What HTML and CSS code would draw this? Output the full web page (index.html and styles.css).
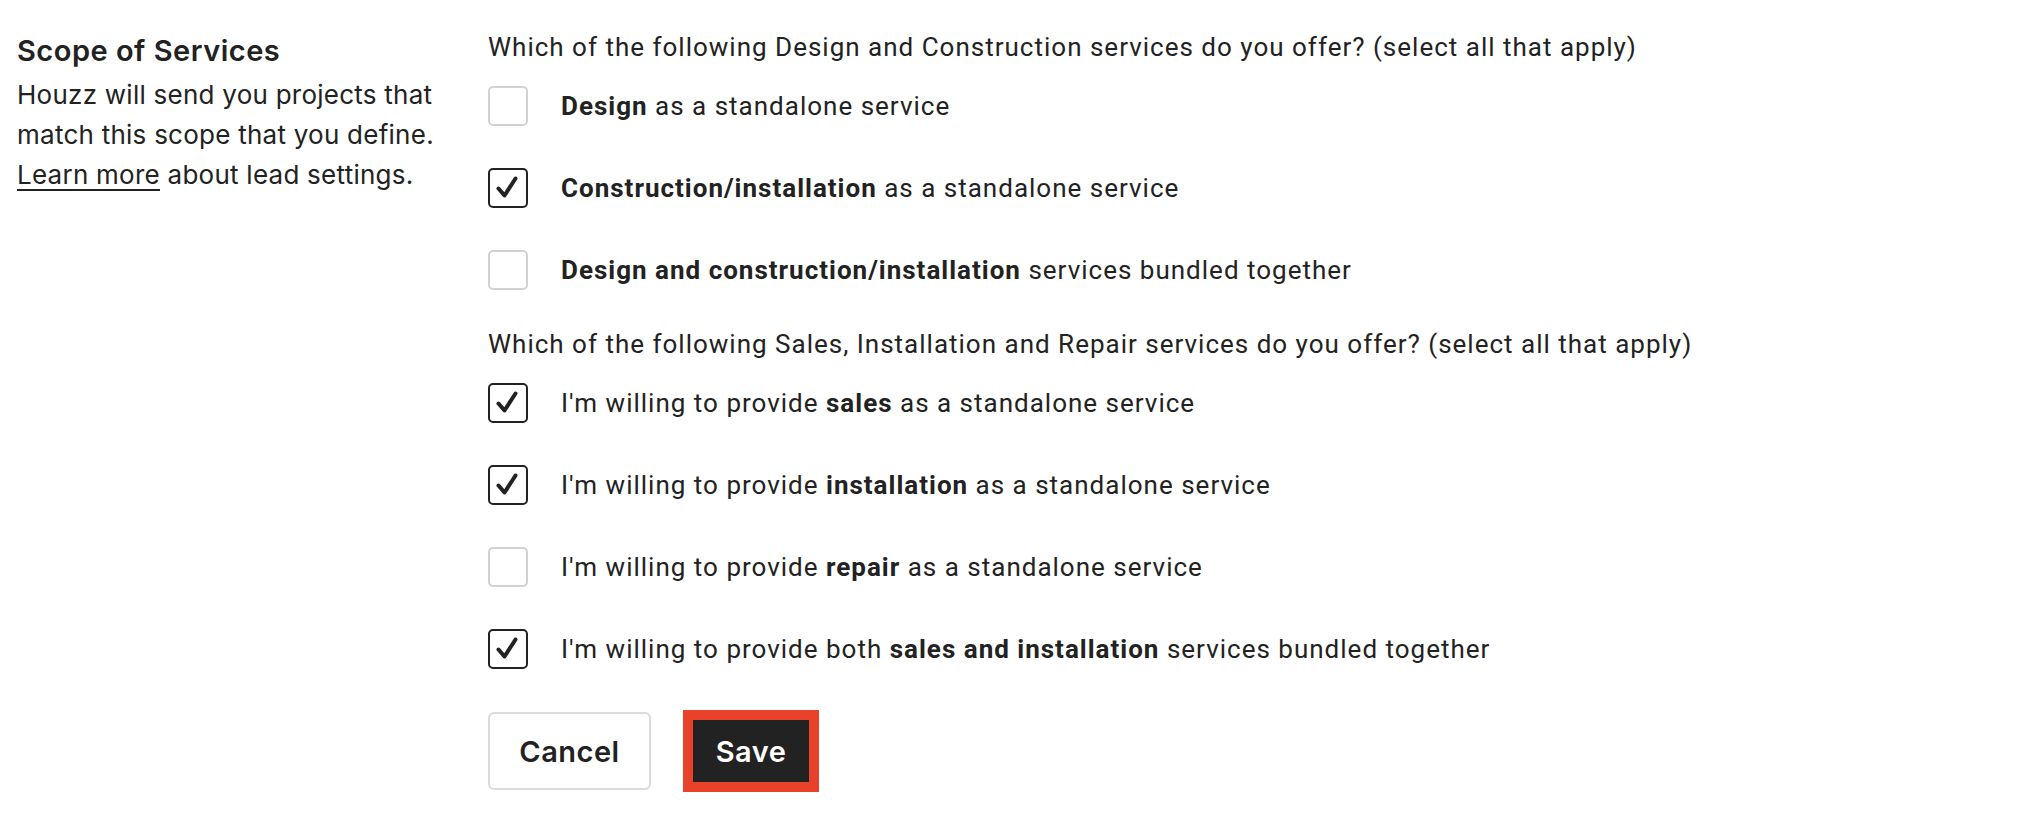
FILE: index.html
```html
<!DOCTYPE html>
<html>
<head>
<meta charset="utf-8">
<link rel="stylesheet" href="styles.css">
</head>
<body>
<div class="page">
  <aside class="intro">
    <h2 class="intro-title">Scope of Services</h2>
    <p class="intro-text">Houzz will send you projects that match this scope that you define. <a class="intro-link" href="#">Learn more</a> about lead settings.</p>
  </aside>
  <main class="form">
    <p class="question">Which of the following Design and Construction services do you offer? (select all that apply)</p>
    <div class="options">
      <label class="option"><span class="box"></span><span class="label"><b>Design</b> as a standalone service</span></label>
      <label class="option"><span class="box checked"><svg viewBox="0 0 40 40"><path d="M10.5 20.5 L16.5 27.5 L27.5 10.5"/></svg></span><span class="label"><b>Construction/installation</b> as a standalone service</span></label>
      <label class="option"><span class="box"></span><span class="label"><b>Design and construction/installation</b> services bundled together</span></label>
    </div>
    <p class="question question-second">Which of the following Sales, Installation and Repair services do you offer? (select all that apply)</p>
    <div class="options">
      <label class="option"><span class="box checked"><svg viewBox="0 0 40 40"><path d="M10.5 20.5 L16.5 27.5 L27.5 10.5"/></svg></span><span class="label">I'm willing to provide <b>sales</b> as a standalone service</span></label>
      <label class="option"><span class="box checked"><svg viewBox="0 0 40 40"><path d="M10.5 20.5 L16.5 27.5 L27.5 10.5"/></svg></span><span class="label">I'm willing to provide <b>installation</b> as a standalone service</span></label>
      <label class="option"><span class="box"></span><span class="label">I'm willing to provide <b>repair</b> as a standalone service</span></label>
      <label class="option"><span class="box checked"><svg viewBox="0 0 40 40"><path d="M10.5 20.5 L16.5 27.5 L27.5 10.5"/></svg></span><span class="label">I'm willing to provide both <b>sales and installation</b> services bundled together</span></label>
    </div>
    <div class="actions">
      <button class="btn btn-cancel">Cancel</button>
      <button class="btn btn-save">Save</button>
    </div>
  </main>
</div>
</body>
</html>
```

FILE: styles.css
```css
html, body {
  margin: 0;
  padding: 0;
  background: #ffffff;
}

body {
  color: #222222;
  font-family: "Inter", "Noto Sans", sans-serif;
}

.page {
  display: grid;
  grid-template-columns: 471px 1fr;
  padding: 27px 0 0 17px;
}

.intro-title {
  margin: 0;
  font-size: 29px;
  font-weight: 600;
  letter-spacing: 0.5px;
  line-height: 48px;
  color: #222222;
}

.intro-text {
  margin: 0;
  font-size: 26px;
  letter-spacing: 0.25px;
  line-height: 40px;
  width: 450px;
}

.intro-link {
  color: #222222;
  text-decoration: underline;
  text-underline-offset: 5px;
}

.form {
  font-family: "Roboto", "Noto Sans", sans-serif;
  font-size: 26px;
  letter-spacing: 1px;
}

.question {
  margin: 0;
  line-height: 40px;
}

.question-second {
  margin-top: 34px;
}

.options {
  display: flex;
  flex-direction: column;
  gap: 42px;
  margin-top: 19px;
}

.option {
  display: flex;
  align-items: center;
  gap: 33px;
  height: 40px;
}

.box {
  box-sizing: border-box;
  width: 40px;
  height: 40px;
  flex: none;
  border: 2px solid #d2d2d2;
  border-radius: 5px;
  display: flex;
  align-items: center;
  justify-content: center;
}

.box.checked {
  border-color: #222222;
}

.box svg {
  width: 40px;
  height: 40px;
  margin: -2px;
}

.box svg path {
  fill: none;
  stroke: #222222;
  stroke-width: 4;
  stroke-linecap: round;
  stroke-linejoin: round;
}

.label b {
  font-weight: 700;
  letter-spacing: 1px;
}

.actions {
  display: flex;
  align-items: center;
  gap: 32px;
  margin-top: 41px;
}

.btn {
  font-family: "Inter", "Noto Sans", sans-serif;
  font-size: 29px;
  font-weight: 600;
  letter-spacing: 0.5px;
  cursor: pointer;
}

.btn-cancel {
  box-sizing: border-box;
  width: 163px;
  height: 78px;
  background: #ffffff;
  color: #222222;
  border: 2px solid #dedad5;
  border-radius: 6px;
}

.btn-save {
  box-sizing: border-box;
  width: 136px;
  height: 82px;
  background: #222222;
  color: #ffffff;
  border: 10px solid #e8432a;
  border-radius: 0;
}
```
